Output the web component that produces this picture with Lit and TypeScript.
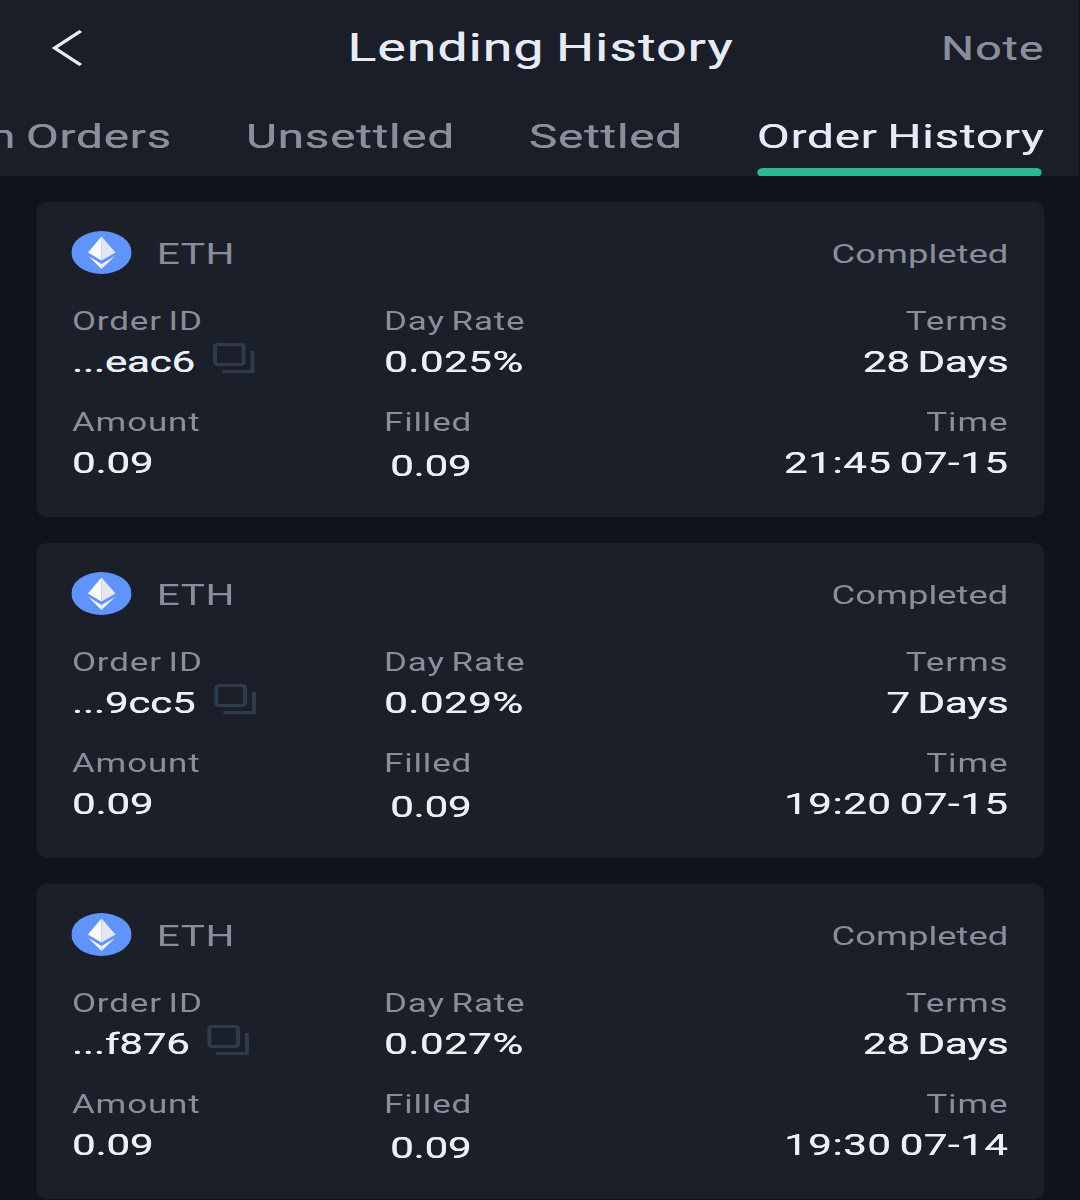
import { LitElement, html, css, svg } from 'lit';
import { customElement } from 'lit/decorators.js';

type Order = {
  id: string;
  rate: string;
  terms: string;
  time: string;
};

const ORDERS: Array<Order> = [
  { id: '...eac6', rate: '0.025%', terms: '28 Days', time: '21:45 07-15' },
  { id: '...9cc5', rate: '0.029%', terms: '7 Days', time: '19:20 07-15' },
  { id: '...f876', rate: '0.027%', terms: '28 Days', time: '19:30 07-14' },
];

const TABS = ['Open Orders', 'Unsettled', 'Settled', 'Order History'];

const ethIcon = svg`
  <svg class="eth" width="43" height="43" viewBox="0 0 60 43" preserveAspectRatio="none">
    <ellipse cx="30" cy="21.5" rx="30" ry="21.5" fill="#6093fb"></ellipse>
    <path d="M30 5.5 L16.5 21.5 L30 29.5 Z" fill="#ffffff"></path>
    <path d="M30 5.5 L44 21.5 L30 29.5 Z" fill="#e4e6f0"></path>
    <path d="M17 25 L30 33 L30 38 Z" fill="#ffffff"></path>
    <path d="M43.5 25 L30 33 L30 38 Z" fill="#eef0f7"></path>
  </svg>
`;

const copyIcon = svg`
  <svg class="copy" width="30" height="31" viewBox="0 0 30 31" fill="none" stroke="#2f3a4c" stroke-width="3">
    <rect x="1.5" y="1.5" width="20.5" height="20" rx="2"></rect>
    <path d="M6.5 28.5 H28.5 V8"></path>
  </svg>
`;

// the whole page is drawn 1.4x wide, the reference is stretched horizontally
@customElement('app-root')
export class AppRoot extends LitElement {
  static styles = css`
    :host {
      display: block;
      width: 1080px;
      height: 1200px;
      overflow: hidden;
      background: #10131c;
      font-family: 'Roboto', 'Liberation Sans', sans-serif;
    }
    .stage {
      width: 771.43px;
      height: 1200px;
      transform: scaleX(1.4);
      transform-origin: 0 0;
      word-spacing: -2px;
    }
    .top {
      background: #1a1e29;
      height: 176px;
      overflow: hidden;
    }
    .title-row {
      height: 94px;
      display: grid;
      grid-template-columns: 1fr auto 1fr;
      align-items: center;
      padding: 1px 25.5px 0 37px;
    }
    .back {
      display: block;
      margin-top: -1px;
    }
    .title {
      margin-right: 10.7px;
      font-size: 38px;
      letter-spacing: 0.87px;
      color: #e6eaf6;
      white-space: nowrap;
      text-shadow: 0.3px 0 0 #e6eaf6;
    }
    .note {
      justify-self: end;
      font-size: 33px;
      letter-spacing: 0.8px;
      color: #8a8e9a;
      text-shadow: 0.3px 0 0 #8a8e9a;
    }
    .tabs {
      height: 82px;
      display: flex;
      justify-content: flex-end;
      gap: 52.9px;
      padding-right: 25.5px;
    }
    .tab {
      flex: none;
      font-size: 34px;
      letter-spacing: 0.57px;
      line-height: 82px;
      height: 82px;
      color: #8a8e9a;
      white-space: nowrap;
      position: relative;
      text-shadow: 0.3px 0 0 #8a8e9a;
    }
    .tab.active {
      color: #e6eaf6;
      text-shadow: 0.3px 0 0 #e6eaf6;
    }
    .tab.active::after {
      content: '';
      position: absolute;
      left: 0;
      right: 2px;
      bottom: 0;
      height: 9px;
      border-radius: 4px;
      background: #2eb892;
    }
    .list {
      display: flex;
      flex-direction: column;
      gap: 26px;
      padding: 26px 25.7px 0;
    }
    .card {
      height: 315px;
      box-sizing: border-box;
      background: #1b1f2a;
      border-radius: 7px / 10px;
      padding: 29px 25.5px 0 25.7px;
    }
    .head {
      display: flex;
      align-items: center;
      height: 44px;
    }
    .eth {
      display: block;
      margin: -2px 17.5px 0 0;
    }
    .coin {
      margin-top: 2px;
      font-size: 29px;
      letter-spacing: 0.4px;
      color: #8a8e9a;
    }
    .status {
      margin: 2px 0 0 auto;
      font-size: 26px;
      color: #8a8e9a;
    }
    .grid {
      display: grid;
      grid-template-columns: 222.9px 1fr auto;
      row-gap: 21px;
      margin-top: 29px;
    }
    .cell {
      display: flex;
      flex-direction: column;
    }
    .cell.right {
      align-items: flex-end;
    }
    .label {
      font-size: 25px;
      line-height: 35px;
      letter-spacing: 0.6px;
      color: #8a8e9a;
      white-space: nowrap;
    }
    .value {
      display: flex;
      align-items: center;
      font-size: 30px;
      line-height: 45px;
      letter-spacing: 0.4px;
      color: #eceff8;
      white-space: nowrap;
      text-shadow: 0.3px 0 0 #eceff8;
    }
    .value.tight {
      letter-spacing: -0.1px;
    }
    .value.filled {
      padding-left: 4.3px;
      position: relative;
      top: 3px;
    }
    .copy {
      display: block;
      margin-left: 13px;
      margin-top: -6px;
    }
  `;

  private _cell(label: string, value: unknown, cls = '') {
    return html`
      <div class="cell ${cls}">
        <div class="label">${label}</div>
        ${value}
      </div>
    `;
  }

  private _card(order: Order) {
    return html`
      <section class="card">
        <div class="head">
          ${ethIcon}
          <span class="coin">ETH</span>
          <span class="status">Completed</span>
        </div>
        <div class="grid">
          ${this._cell('Order ID', html`<div class="value tight">${order.id}${copyIcon}</div>`)}
          ${this._cell('Day Rate', html`<div class="value">${order.rate}</div>`)}
          ${this._cell('Terms', html`<div class="value tight">${order.terms}</div>`, 'right')}
          ${this._cell('Amount', html`<div class="value tight">0.09</div>`)}
          ${this._cell('Filled', html`<div class="value tight filled">0.09</div>`)}
          ${this._cell('Time', html`<div class="value">${order.time}</div>`, 'right')}
        </div>
      </section>
    `;
  }

  render() {
    return html`
      <div class="stage">
        <div class="top">
          <div class="title-row">
            <svg class="back" width="23" height="38" viewBox="0 0 23 38" fill="none" stroke="#e6eaf6" stroke-width="3">
              <path d="M20.7 2 L2.1 19 L20.7 36"></path>
            </svg>
            <div class="title">Lending History</div>
            <div class="note">Note</div>
          </div>
          <div class="tabs">
            ${TABS.map(
              (tab, index) =>
                html`<div class="tab ${index === TABS.length - 1 ? 'active' : ''}">${tab}</div>`,
            )}
          </div>
        </div>
        <div class="list">${ORDERS.map((order) => this._card(order))}</div>
      </div>
    `;
  }
}
